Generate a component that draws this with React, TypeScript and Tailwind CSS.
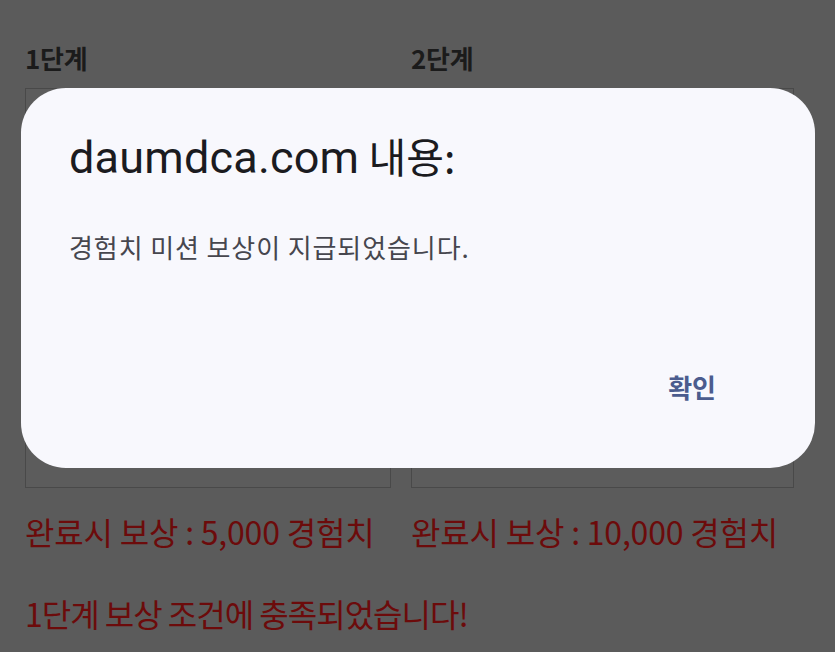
const kr = "font-['Noto_Sans_CJK_KR','Noto_Sans',sans-serif]";

function Stage({ title }: { title: string }) {
  return (
    <div className="flex flex-col">
      <h3 className={`${kr} text-[26px] leading-none font-bold text-[#1b1b1b] tracking-[-0.3px] pt-[45px]`}>
        {title}
      </h3>
      <div className="mt-[17px] h-[400px] border border-[#494949] bg-[#5c5c5c]" />
    </div>
  );
}

export default function App() {
  return (
    <div className="relative w-[835px] h-[652px] overflow-hidden bg-[#5b5b5b]">
      {/* Page behind the dim */}
      <div className="px-[25px]">
        <div className="grid grid-cols-[366px_383px] gap-[20px]">
          <Stage title="1단계" />
          <Stage title="2단계" />
        </div>
        <div className={`${kr} grid grid-cols-[366px_383px] gap-[20px] mt-[22px] text-[32px] leading-[42px] text-[#6c0b0b] tracking-[-0.2px]`}>
          <p>완료시 보상 : 5,000 경험치</p>
          <p>완료시 보상 : 10,000 경험치</p>
        </div>
        <p className={`${kr} mt-[40px] text-[32px] leading-[42px] text-[#6c0b0b] tracking-[-1px]`}>
          1단계 보상 조건에 충족되었습니다!
        </p>
      </div>

      {/* Alert dialog */}
      <div className="absolute inset-0">
        <div className="ml-[21px] mt-[88px] w-[794px] h-[380px] rounded-[45px] bg-[#f8f8fd] flex flex-col pl-[48px] pr-[98px]">
          <h2 className="pt-[47px] leading-none text-[#1b1b1f] whitespace-nowrap">
            <span className="font-['Roboto','Liberation_Sans',sans-serif] text-[45px] tracking-[0.2px]">daumdca.com</span>
            <span className={`${kr} text-[41px]`}> 내용:</span>
          </h2>
          <p className={`${kr} mt-[54px] text-[26px] leading-none text-[#46464e] tracking-[0.9px]`}>
            경험치 미션 보상이 지급되었습니다.
          </p>
          <div className="mt-auto mb-[68px] flex justify-end">
            <button className={`${kr} text-[26px] leading-none font-bold text-[#4b5c8e] mr-[1px]`}>확인</button>
          </div>
        </div>
      </div>
    </div>
  );
}
